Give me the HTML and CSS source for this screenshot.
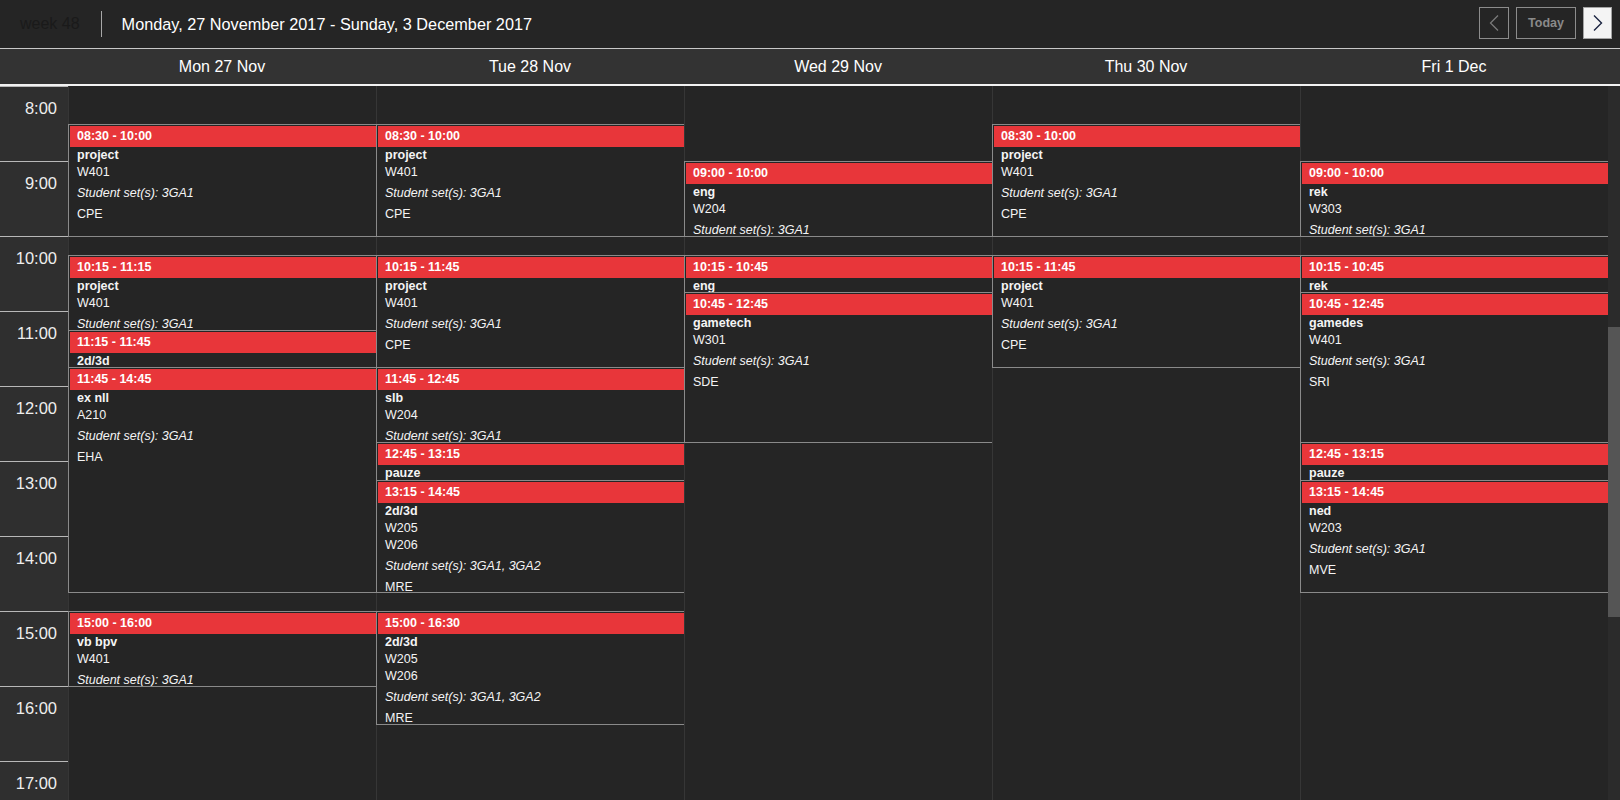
FILE: index.html
```html
<!DOCTYPE html>
<html lang="en">
<head>
<meta charset="utf-8">
<title>Week 48</title>
<link rel="stylesheet" href="styles.css">
</head>
<body>
<div class="app">
  <header class="topbar">
    <span class="week">week 48</span>
    <span class="sep"></span>
    <span class="title">Monday, 27 November 2017 - Sunday, 3 December 2017</span>
    <nav class="nav">
      <div class="btn btn-prev"><svg width="10" height="16" viewBox="0 0 10 16"><polyline points="9,0.5 1.5,8 9,15.5" fill="none" stroke="#7a7a7a" stroke-width="1.3"/></svg></div>
      <div class="btn btn-today">Today</div>
      <div class="btn btn-next"><svg width="10" height="16" viewBox="0 0 10 16"><polyline points="1,0.5 8.5,8 1,15.5" fill="none" stroke="#1b2440" stroke-width="1.4"/></svg></div>
    </nav>
  </header>

  <div class="dayhead">
    <div class="dayhead-cell">Mon 27 Nov</div>
    <div class="dayhead-cell">Tue 28 Nov</div>
    <div class="dayhead-cell">Wed 29 Nov</div>
    <div class="dayhead-cell">Thu 30 Nov</div>
    <div class="dayhead-cell">Fri 1 Dec</div>
  </div>

  <div class="body">
    <div class="times">
      <div class="hour">8:00</div>
      <div class="hour">9:00</div>
      <div class="hour">10:00</div>
      <div class="hour">11:00</div>
      <div class="hour">12:00</div>
      <div class="hour">13:00</div>
      <div class="hour">14:00</div>
      <div class="hour">15:00</div>
      <div class="hour">16:00</div>
      <div class="hour">17:00</div>
    </div>

    <div class="days">
      <!-- Monday -->
      <div class="day">
        <div class="ev" style="top:37.5px;height:113.5px">
          <div class="ev-time">08:30 - 10:00</div>
          <div class="ev-body"><div class="ev-name">project</div><div>W401</div><div class="ev-sets">Student set(s): 3GA1</div><div class="ev-staff">CPE</div></div>
        </div>
        <div class="ev" style="top:168.75px;height:76px">
          <div class="ev-time">10:15 - 11:15</div>
          <div class="ev-body"><div class="ev-name">project</div><div>W401</div><div class="ev-sets">Student set(s): 3GA1</div><div class="ev-staff">CPE</div></div>
        </div>
        <div class="ev" style="top:243.75px;height:38.5px">
          <div class="ev-time">11:15 - 11:45</div>
          <div class="ev-body"><div class="ev-name">2d/3d</div><div>W205</div></div>
        </div>
        <div class="ev" style="top:281.25px;height:226px">
          <div class="ev-time">11:45 - 14:45</div>
          <div class="ev-body"><div class="ev-name">ex nll</div><div>A210</div><div class="ev-sets">Student set(s): 3GA1</div><div class="ev-staff">EHA</div></div>
        </div>
        <div class="ev" style="top:525px;height:76px">
          <div class="ev-time">15:00 - 16:00</div>
          <div class="ev-body"><div class="ev-name">vb bpv</div><div>W401</div><div class="ev-sets">Student set(s): 3GA1</div><div class="ev-staff">CPE</div></div>
        </div>
      </div>

      <!-- Tuesday -->
      <div class="day">
        <div class="ev" style="top:37.5px;height:113.5px">
          <div class="ev-time">08:30 - 10:00</div>
          <div class="ev-body"><div class="ev-name">project</div><div>W401</div><div class="ev-sets">Student set(s): 3GA1</div><div class="ev-staff">CPE</div></div>
        </div>
        <div class="ev" style="top:168.75px;height:113.5px">
          <div class="ev-time">10:15 - 11:45</div>
          <div class="ev-body"><div class="ev-name">project</div><div>W401</div><div class="ev-sets">Student set(s): 3GA1</div><div class="ev-staff">CPE</div></div>
        </div>
        <div class="ev" style="top:281.25px;height:76px">
          <div class="ev-time">11:45 - 12:45</div>
          <div class="ev-body"><div class="ev-name">slb</div><div>W204</div><div class="ev-sets">Student set(s): 3GA1</div><div class="ev-staff">JDB</div></div>
        </div>
        <div class="ev" style="top:356.25px;height:38.5px">
          <div class="ev-time">12:45 - 13:15</div>
          <div class="ev-body"><div class="ev-name">pauze</div></div>
        </div>
        <div class="ev" style="top:393.75px;height:113.5px">
          <div class="ev-time">13:15 - 14:45</div>
          <div class="ev-body"><div class="ev-name">2d/3d</div><div>W205</div><div>W206</div><div class="ev-sets">Student set(s): 3GA1, 3GA2</div><div class="ev-staff">MRE</div></div>
        </div>
        <div class="ev" style="top:525px;height:113.5px">
          <div class="ev-time">15:00 - 16:30</div>
          <div class="ev-body"><div class="ev-name">2d/3d</div><div>W205</div><div>W206</div><div class="ev-sets">Student set(s): 3GA1, 3GA2</div><div class="ev-staff">MRE</div></div>
        </div>
      </div>

      <!-- Wednesday -->
      <div class="day">
        <div class="ev" style="top:75px;height:76px">
          <div class="ev-time">09:00 - 10:00</div>
          <div class="ev-body"><div class="ev-name">eng</div><div>W204</div><div class="ev-sets">Student set(s): 3GA1</div><div class="ev-staff">KVD</div></div>
        </div>
        <div class="ev" style="top:168.75px;height:38.5px">
          <div class="ev-time">10:15 - 10:45</div>
          <div class="ev-body"><div class="ev-name">eng</div><div>W204</div></div>
        </div>
        <div class="ev" style="top:206.25px;height:151px">
          <div class="ev-time">10:45 - 12:45</div>
          <div class="ev-body"><div class="ev-name">gametech</div><div>W301</div><div class="ev-sets">Student set(s): 3GA1</div><div class="ev-staff">SDE</div></div>
        </div>
      </div>

      <!-- Thursday -->
      <div class="day">
        <div class="ev" style="top:37.5px;height:113.5px">
          <div class="ev-time">08:30 - 10:00</div>
          <div class="ev-body"><div class="ev-name">project</div><div>W401</div><div class="ev-sets">Student set(s): 3GA1</div><div class="ev-staff">CPE</div></div>
        </div>
        <div class="ev" style="top:168.75px;height:113.5px">
          <div class="ev-time">10:15 - 11:45</div>
          <div class="ev-body"><div class="ev-name">project</div><div>W401</div><div class="ev-sets">Student set(s): 3GA1</div><div class="ev-staff">CPE</div></div>
        </div>
      </div>

      <!-- Friday -->
      <div class="day">
        <div class="ev" style="top:75px;height:76px">
          <div class="ev-time">09:00 - 10:00</div>
          <div class="ev-body"><div class="ev-name">rek</div><div>W303</div><div class="ev-sets">Student set(s): 3GA1</div><div class="ev-staff">WVH</div></div>
        </div>
        <div class="ev" style="top:168.75px;height:38.5px">
          <div class="ev-time">10:15 - 10:45</div>
          <div class="ev-body"><div class="ev-name">rek</div><div>W303</div></div>
        </div>
        <div class="ev" style="top:206.25px;height:151px">
          <div class="ev-time">10:45 - 12:45</div>
          <div class="ev-body"><div class="ev-name">gamedes</div><div>W401</div><div class="ev-sets">Student set(s): 3GA1</div><div class="ev-staff">SRI</div></div>
        </div>
        <div class="ev" style="top:356.25px;height:38.5px">
          <div class="ev-time">12:45 - 13:15</div>
          <div class="ev-body"><div class="ev-name">pauze</div></div>
        </div>
        <div class="ev" style="top:393.75px;height:113.5px">
          <div class="ev-time">13:15 - 14:45</div>
          <div class="ev-body"><div class="ev-name">ned</div><div>W203</div><div class="ev-sets">Student set(s): 3GA1</div><div class="ev-staff">MVE</div></div>
        </div>
      </div>
    </div>

    <div class="scroll"><div class="thumb"></div></div>
  </div>
</div>
</body>
</html>
```

FILE: styles.css
```css
html, body {
  margin: 0;
  height: 100%;
  overflow: hidden;
}

body {
  background: #252525;
  color: #fff;
  font-family: "Liberation Sans", Arial, sans-serif;
}

.app {
  display: flex;
  flex-direction: column;
  height: 100vh;
}

/* ---------- top bar ---------- */
.topbar {
  height: 48px;
  flex: none;
  display: flex;
  align-items: center;
  padding: 0 8px 0 20px;
  border-bottom: 1px solid #c8c8c8;
  background: #252525;
}

.week {
  font-size: 16px;
  color: #1a1a1a;
}

.sep {
  width: 1px;
  height: 26px;
  background: #a8a8a8;
  margin: 0 20px 0 21px;
}

.title {
  font-size: 16.25px;
  color: #fff;
}

.nav {
  margin-left: auto;
  align-self: flex-start;
  margin-top: 7px;
  display: flex;
  gap: 7px;
}

.btn {
  height: 32px;
  box-sizing: border-box;
  border: 1px solid #8c8c8c;
  display: flex;
  align-items: center;
  justify-content: center;
}

.btn-prev { width: 30px; }

.btn-today {
  width: 60px;
  font-size: 12.5px;
  font-weight: bold;
  color: #8a8a8a;
}

.btn-next {
  width: 29px;
  background: #f4f4f4;
  border-color: #a4a4a4;
}

/* ---------- day header ---------- */
.dayhead {
  height: 35px;
  flex: none;
  display: flex;
  padding-left: 68px;
  background: #333;
  border-bottom: 2px solid #f2f2f2;
}

.dayhead-cell {
  width: 308px;
  flex: none;
  display: flex;
  align-items: center;
  justify-content: center;
  font-size: 16px;
  color: #fff;
}

/* ---------- body ---------- */
.body {
  flex: 1;
  min-height: 0;
  display: flex;
  overflow: hidden;
}

.times {
  width: 68px;
  flex: none;
  background: #2f2f2f;
}

.hour {
  height: 75px;
  box-sizing: border-box;
  border-top: 1px solid #b8b8b8;
  padding: 12px 11px 0 0;
  text-align: right;
  font-size: 16.5px;
  line-height: 18px;
  color: #eee;
}

.days {
  width: 1540px;
  flex: none;
  display: flex;
  overflow: hidden;
}

.day {
  width: 308px;
  flex: none;
  box-sizing: border-box;
  border-left: 1px solid #363636;
  position: relative;
}

.scroll {
  width: 12px;
  flex: none;
  background: #2b2b2b;
}

.thumb {
  height: 290px;
  margin-top: 241px;
  background: #555;
}

/* ---------- events ---------- */
.ev {
  position: absolute;
  left: -1px;
  width: 309px;
  box-sizing: border-box;
  border: 1px solid #8a8a8a;
  padding: 1px 0 0 1px;
  background: #252525;
  overflow: hidden;
  font-size: 12.5px;
  color: #f4f4f4;
}

.ev-time {
  height: 21px;
  line-height: 21px;
  padding-left: 7px;
  background: #e8363a;
  font-weight: bold;
  color: #fff;
}

.ev-body {
  padding-left: 7px;
  line-height: 17px;
}

.ev-name { font-weight: bold; }

.ev-sets {
  font-style: italic;
  margin-top: 4px;
}

.ev-staff { margin-top: 4px; }
```
